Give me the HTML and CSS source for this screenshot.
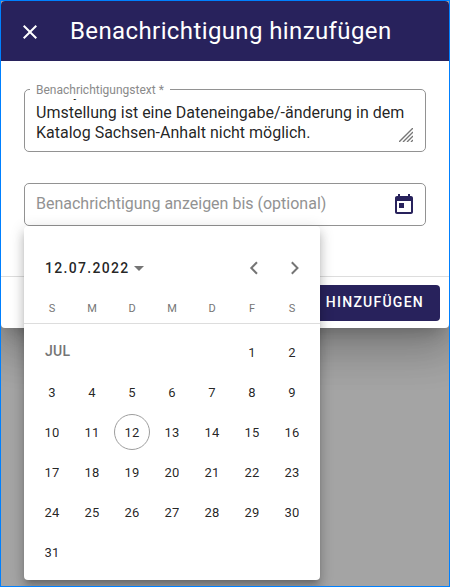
FILE: index.html
```html
<!DOCTYPE html>
<html lang="de">
<head>
<meta charset="utf-8">
<title>Benachrichtigung hinzufügen</title>
<link rel="stylesheet" href="styles.css">
</head>
<body>
<main class="dialog">
  <header class="toolbar">
    <svg class="close" viewBox="0 0 24 24"><path d="M19 6.41 17.59 5 12 10.59 6.41 5 5 6.41 10.59 12 5 17.59 6.41 19 12 13.41 17.59 19 19 17.59 13.41 12z"/></svg>
    <h1 class="title">Benachrichtigung hinzufügen</h1>
  </header>
  <section class="content">
    <div class="field field-text">
      <span class="label">Benachrichtigungstext *</span>
      <div class="textarea">
        <div class="scrolled">
          <div class="previous">y</div>
          <div>Umstellung ist eine Dateneingabe/-änderung in dem</div>
          <div>Katalog Sachsen-Anhalt nicht möglich.</div>
        </div>
      </div>
      <svg class="resizer" viewBox="0 0 14 14"><path d="M0 14 14 0M4 14 14 4M8 14l6-6M12 14l2-2"/></svg>
    </div>
    <div class="field field-date">
      <span class="placeholder">Benachrichtigung anzeigen bis (optional)</span>
      <svg class="today" viewBox="0 0 24 24"><path d="M19 3h-1V1h-2v2H8V1H6v2H5c-1.110 0-1.990.9-1.990 2L3 19c0 1.100.89 2 2 2h14c1.100 0 2-.9 2-2V5c0-1.100-.9-2-2-2zm0 16H5V8h14v11zM7 10h5v5H7z"/></svg>
    </div>
  </section>
  <footer class="actions"><button class="submit">HINZUFÜGEN</button></footer>
</main>
<div class="calendar">
  <div class="controls">
    <span class="period">12.07.2022</span><i class="caret"></i>
    <svg class="nav" viewBox="0 0 12 14"><path d="M9 1.200 3.300 7 9 12.800"/></svg>
    <svg class="nav" viewBox="0 0 12 14"><path d="M3.800 1.200 9.500 7l-5.700 5.800"/></svg>
  </div>
  <div class="weekdays"><span>S</span><span>M</span><span>D</span><span>M</span><span>D</span><span>F</span><span>S</span></div>
  <div class="days">
    <span class="month">JUL</span><span>1</span><span>2</span>
    <span>3</span><span>4</span><span>5</span><span>6</span><span>7</span><span>8</span><span>9</span>
    <span>10</span><span>11</span><span class="current">12</span><span>13</span><span>14</span><span>15</span><span>16</span>
    <span>17</span><span>18</span><span>19</span><span>20</span><span>21</span><span>22</span><span>23</span>
    <span>24</span><span>25</span><span>26</span><span>27</span><span>28</span><span>29</span><span>30</span>
    <span>31</span>
  </div>
</div>
</body>
</html>
```
FILE: styles.css
```css
* { box-sizing: border-box; }
body {
  margin: 0;
  height: 587px;
  position: relative;
  overflow: hidden;
  border: 1px solid #0080ff;
  background: #a4a4a4;
  font-family: Roboto, sans-serif;
  color: rgba(0, 0, 0, .87);
}
.dialog {
  height: 327px;
  display: flex;
  flex-direction: column;
  background: #fff;
  border-radius: 4px;
  overflow: hidden;
  box-shadow: 0 11px 15px -7px rgba(0,0,0,.2), 0 24px 38px 3px rgba(0,0,0,.14), 0 9px 46px 8px rgba(0,0,0,.12);
}
.toolbar {
  height: 60px;
  flex: none;
  display: flex;
  align-items: center;
  padding-left: 17px;
  background: #28225c;
  color: #fff;
}
.close { width: 24px; height: 24px; fill: #fff; margin-top: 2px; }
.title { margin: 0 0 0 28px; font-size: 24px; font-weight: 400; letter-spacing: .39px; white-space: nowrap; }
.content { height: 215px; padding: 28px 23px 0; flex: none; }
.field { position: relative; border: 1px solid #929292; border-radius: 5px; padding-left: 11px; }
.field-text { height: 63px; padding-top: 9px; }
.label {
  position: absolute;
  left: 5px;
  top: -7px;
  padding: 0 6px;
  background: #fff;
  color: #8a8a8a;
  font-size: 12px;
  line-height: 15px;
  height: 14px;
  white-space: nowrap;
}
.textarea { height: 46px; overflow: hidden; display: flex; align-items: flex-start; font-size: 16px; line-height: 20px; white-space: nowrap; }
.scrolled { margin-top: -17px; }
.previous { padding-left: 37px; margin-bottom: 1px; }
.resizer { position: absolute; right: 12px; bottom: 9px; width: 14px; height: 14px; fill: none; stroke: #777; stroke-width: 1.4; }
.field-date { margin-top: 31px; height: 43px; display: flex; align-items: center; justify-content: space-between; padding-right: 9px; }
.placeholder { color: #929292; font-size: 16px; white-space: nowrap; margin-top: -2px; }
.today { width: 24px; height: 24px; fill: #28225c; }
.actions { flex: 1; border-top: 1px solid #ddd; padding: 8px 9px; display: flex; justify-content: flex-end; align-items: flex-start; }
.submit {
  height: 36px;
  padding: 0 16px 2px;
  border: 0;
  border-radius: 4px;
  background: #28225c;
  color: #fff;
  font: 500 14px Roboto, sans-serif;
  letter-spacing: 1.25px;
}
.calendar {
  position: absolute;
  left: 23px;
  top: 225px;
  width: 296px;
  height: 354px;
  padding: 0 8px;
  background: #fff;
  border-radius: 4px;
  box-shadow: 0 5px 5px -3px rgba(0,0,0,.2), 0 8px 10px 1px rgba(0,0,0,.14), 0 3px 14px 2px rgba(0,0,0,.12);
}
.controls { display: flex; align-items: center; height: 75px; padding: 9px 12px 0 13px; }
.period { font-size: 14px; font-weight: 500; letter-spacing: 1.3px; }
.caret { border: 5px solid transparent; border-top-color: #757575; border-bottom: 0; margin: 1px auto 0 5px; }
.nav { width: 12px; height: 14px; fill: none; stroke: #757575; stroke-width: 2; margin: 0 0 1px 28px; }
.weekdays {
  display: grid;
  grid-template-columns: repeat(7, 40px);
  height: 23px;
  margin: 0 -8px;
  padding: 1px 8px 0;
  border-bottom: 1px solid #ddd;
  text-align: center;
  font-size: 11px;
  line-height: 14px;
  color: #757575;
}
.days { display: grid; grid-template-columns: repeat(7, 40px); grid-auto-rows: 40px; padding-top: 8px; font-size: 13px; letter-spacing: .25px; }
.days span { display: flex; align-items: center; justify-content: center; }
.days .month { grid-column: span 5; justify-content: flex-start; padding: 0 0 2px 13px; font-size: 14px; font-weight: 500; color: #757575; }
.days .current { width: 36px; height: 36px; margin: 2px; border: 1px solid #9e9e9e; border-radius: 50%; }
```
